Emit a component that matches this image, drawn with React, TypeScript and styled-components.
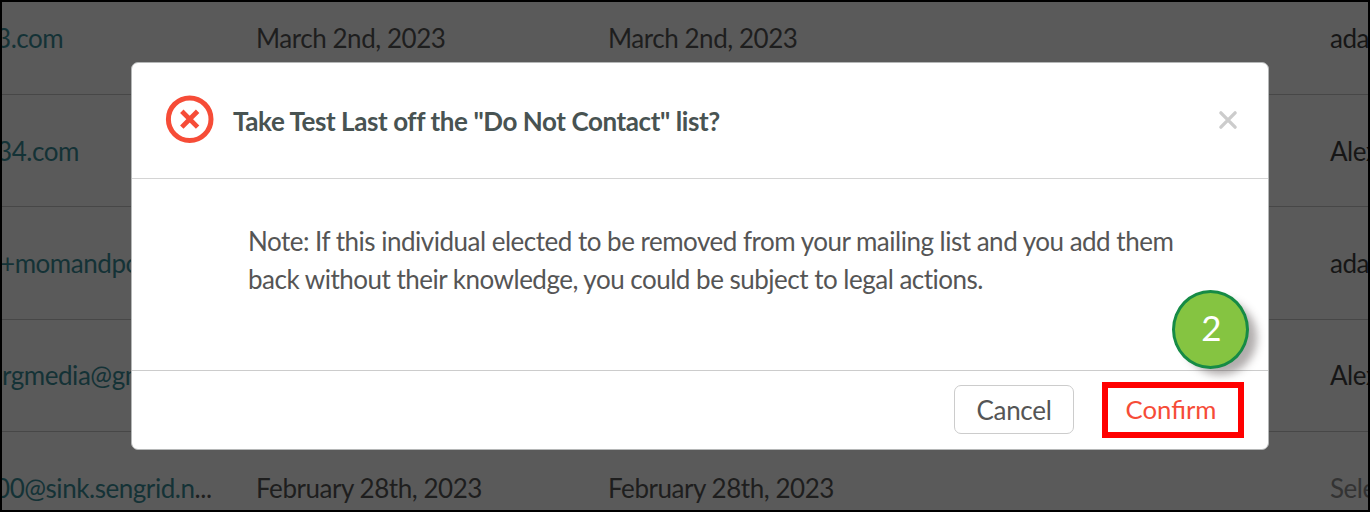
import React from "react";
import styled, { createGlobalStyle } from "styled-components";

const GlobalStyle = createGlobalStyle`
  *, *::before, *::after { box-sizing: border-box; }
  body { margin: 0; font-family: Lato, "Liberation Sans", sans-serif; }
`;

const Screen = styled.div`
  position: relative;
  width: 1370px;
  height: 512px;
  overflow: hidden;
  border: 2px solid #000;
  background: #5a5a5a;
`;

const Table = styled.div`
  display: flex;
  flex-direction: column;
`;

const Row = styled.div<{ $height: number; $bottom: number }>`
  display: grid;
  grid-template-columns: 254px 352px 720px 1fr;
  align-items: end;
  flex: none;
  height: ${(p) => p.$height}px;
  padding-bottom: ${(p) => p.$bottom}px;
  border-bottom: 1px solid #474747;
`;

const Cell = styled.div<{ $muted?: boolean }>`
  overflow: hidden;
  white-space: nowrap;
  font-size: 26px;
  letter-spacing: -0.45px;
  line-height: 34px;
  color: ${(p) => (p.$muted ? "#333" : "#1e1e1e")};
`;

const Owner = styled(Cell)`
  padding-left: 2px;
  color: ${(p) => (p.$muted ? "#333" : "#161616")};
`;

const Email = styled.span<{ $shift: number }>`
  margin-left: ${(p) => p.$shift}px;
  color: #143236;
`;

const Overlay = styled.div`
  position: absolute;
  inset: 0;
  padding: 60px 0 0 129px;
`;

const Dialog = styled.section`
  display: flex;
  flex-direction: column;
  width: 1138px;
  height: 388px;
  border: 1px solid #b5b7b7;
  border-radius: 7px;
  background: #fff;
`;

const Header = styled.header`
  display: flex;
  align-items: center;
  height: 116px;
  padding: 0 30px 2px 33px;
  border-bottom: 1px solid #d4d4d4;
`;

const Title = styled.h1`
  flex: 1;
  margin: 2px 0 0 18px;
  font-size: 26px;
  font-weight: 700;
  letter-spacing: -0.42px;
  line-height: 34px;
  color: #485352;
`;

const CloseButton = styled.button`
  display: flex;
  margin-top: 1px;
  padding: 0;
  border: 0;
  background: none;
`;

const Body = styled.div`
  height: 192px;
  padding: 43px 80px 0 116px;
  border-bottom: 1px solid #ccc;
`;

const Note = styled.p`
  margin: 0;
  font-size: 26px;
  line-height: 38px;
  letter-spacing: -0.5px;
  color: #555;
  white-space: nowrap;
`;

const Footer = styled.footer`
  display: flex;
  align-items: flex-start;
  justify-content: flex-end;
  gap: 28px;
  padding: 11px 24px 0 0;
`;

const Button = styled.button<{ $danger?: boolean }>`
  width: ${(p) => (p.$danger ? 142 : 120)}px;
  height: ${(p) => (p.$danger ? 56 : 49)}px;
  margin-top: ${(p) => (p.$danger ? 0 : 3)}px;
  padding: ${(p) => (p.$danger ? "0 4px 2px 0" : "1px 0 0")};
  border: ${(p) => (p.$danger ? "6px solid #f00" : "1px solid #ccc")};
  border-radius: ${(p) => (p.$danger ? 0 : 7)}px;
  background: #fff;
  font-family: inherit;
  font-size: ${(p) => (p.$danger ? 25.7 : 26)}px;
  letter-spacing: ${(p) => (p.$danger ? "normal" : "-0.3px")};
  line-height: 34px;
  color: ${(p) => (p.$danger ? "#f64c37" : "#555")};
`;

const StepBadge = styled.div`
  position: absolute;
  left: 1170px;
  top: 288px;
  display: flex;
  align-items: center;
  justify-content: center;
  width: 77px;
  height: 79px;
  padding: 0 0 4px 2px;
  border: 3px solid #168b45;
  border-radius: 50%;
  background: #85c441;
  box-shadow: 10px 8px 9px -2px rgba(70, 60, 60, 0.42);
  font-size: 35px;
  line-height: 1;
  color: #fff;
`;

type Contact = {
  email: string;
  shift: number;
  truncated?: boolean;
  date?: string;
  owner: string;
  muted?: boolean;
  height: number;
  bottom: number;
};

const contacts: Contact[] = [
  { email: "3.com", shift: -6, date: "March 2nd, 2023", owner: "adam", height: 93, bottom: 39 },
  { email: "34.com", shift: -5, owner: "Alex", height: 112, bottom: 38 },
  { email: "+momandpop", shift: -2, owner: "adam", height: 113, bottom: 39 },
  { email: "rgmedia@gmail", shift: 0, owner: "Alex", height: 112, bottom: 39 },
  { email: "00@sink.sengrid.n", shift: -7, truncated: true, date: "February 28th, 2023", owner: "Select", muted: true, height: 113, bottom: 39 },
];

export default function App() {
  return (
    <>
      <GlobalStyle />
      <Screen>
        <Table>
          {contacts.map((c) => (
            <Row key={c.email} $height={c.height} $bottom={c.bottom}>
              <Cell>
                <Email $shift={c.shift}>{c.email}</Email>
                {c.truncated && "..."}
              </Cell>
              <Cell>{c.date}</Cell>
              <Cell>{c.date}</Cell>
              <Owner $muted={c.muted}>{c.owner}</Owner>
            </Row>
          ))}
        </Table>
        <Overlay>
          <Dialog role="dialog">
            <Header>
              <svg width="50" height="50" viewBox="0 0 50 50" fill="none" stroke="#f64c37">
                <circle cx="24.7" cy="24.2" r="21.3" strokeWidth="5" />
                <path d="M16.8 16.3 32.6 32.1M32.6 16.3 16.8 32.1" strokeWidth="4.8" />
              </svg>
              <Title>Take Test Last off the "Do Not Contact" list?</Title>
              <CloseButton aria-label="Close">
                <svg width="20" height="20" viewBox="0 0 20 20" fill="none" stroke="#ccc">
                  <path d="M2.9 2.9 17.1 17.1M17.1 2.9 2.9 17.1" strokeWidth="3.4" strokeLinecap="round" />
                </svg>
              </CloseButton>
            </Header>
            <Body>
              <Note>
                Note: If this individual elected to be removed from your mailing list and you add them
                <br />
                back without their knowledge, you could be subject to legal actions.
              </Note>
            </Body>
            <Footer>
              <Button>Cancel</Button>
              <Button $danger>Confirm</Button>
            </Footer>
          </Dialog>
        </Overlay>
        <StepBadge>2</StepBadge>
      </Screen>
    </>
  );
}
